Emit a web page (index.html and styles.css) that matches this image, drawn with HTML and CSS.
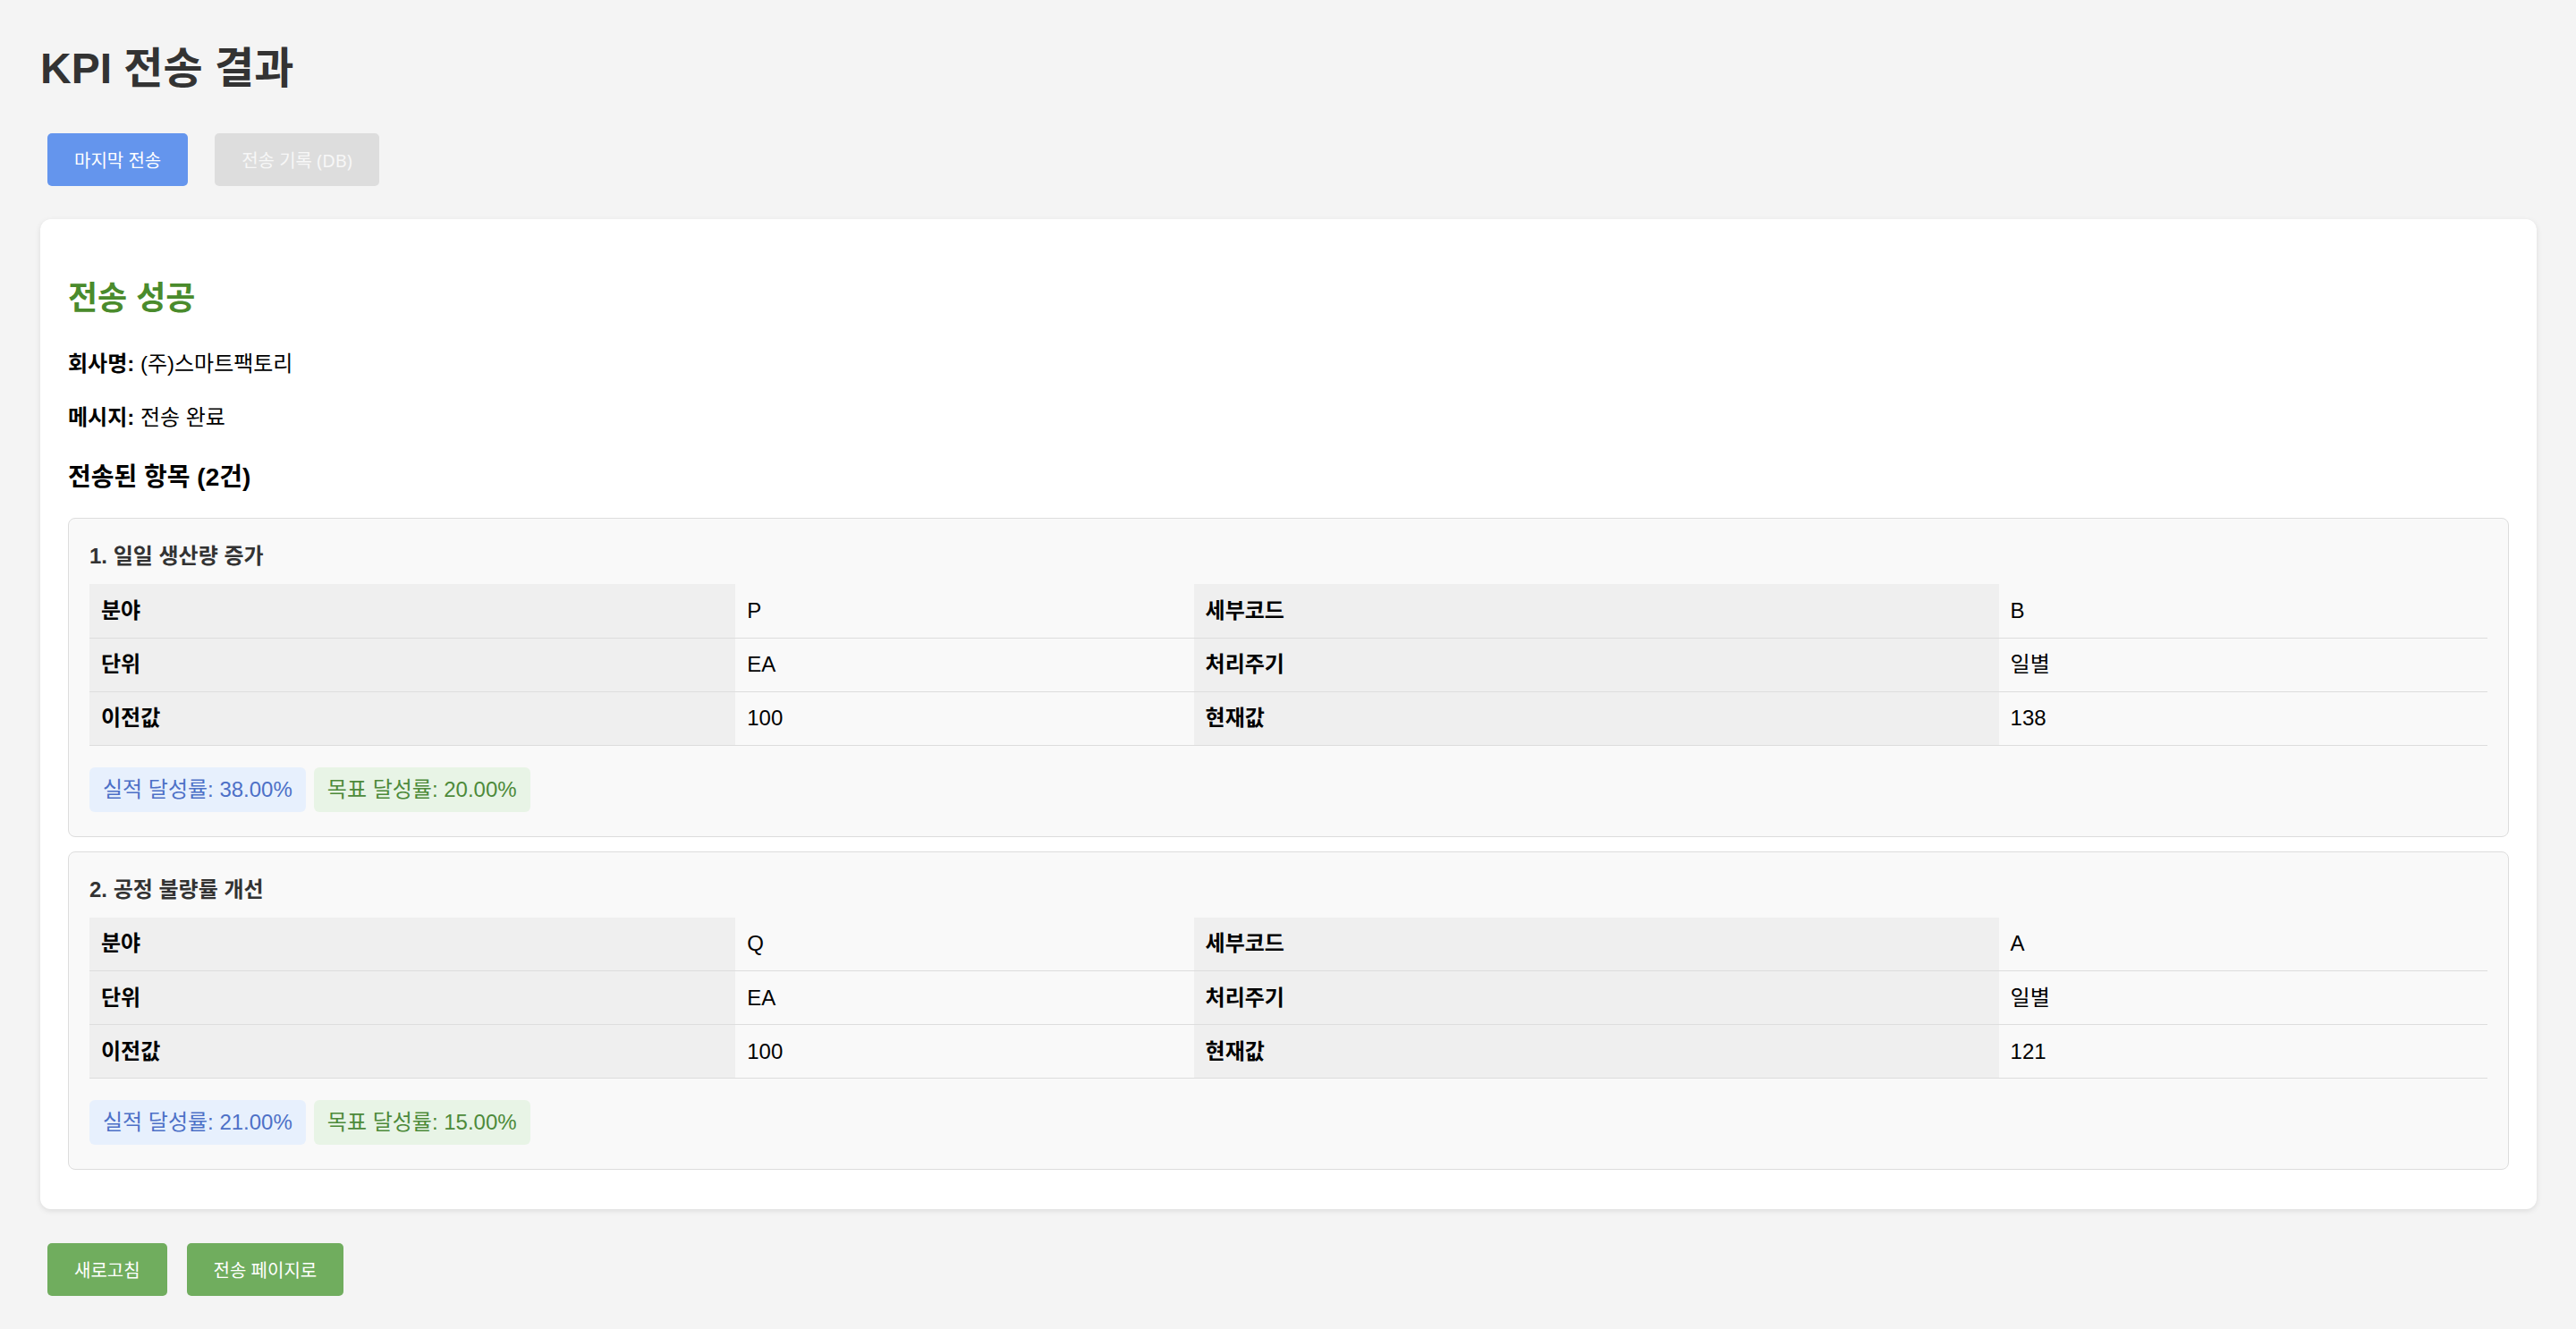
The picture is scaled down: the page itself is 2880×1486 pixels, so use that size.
FILE: index.html
```html
<!DOCTYPE html>
<html>

<head>
  <meta charset="utf-8">
  <title>KPI 전송 결과</title>
  <link rel="stylesheet" href="styles.css">
</head>

<body>

  <h1 class="page-title">KPI 전송 결과</h1>

  <div class="tabs">
    <button class="tab tab-active">마지막 전송</button>
    <button class="tab tab-off">전송 기록 (DB)</button>
  </div>

  <div class="card">
    <h2 class="result-ok">전송 성공</h2>
    <p class="info"><b>회사명:</b> (주)스마트팩토리</p>
    <p class="info"><b>메시지:</b> 전송 완료</p>

    <h3 class="sent-title">전송된 항목 (2건)</h3>

    <div class="item-list">
      <div class="item">
        <h4 class="item-title">1. 일일 생산량 증가</h4>
        <table class="kpi-table">
          <colgroup>
            <col class="c1"><col class="c2"><col class="c3"><col class="c4">
          </colgroup>
          <tr>
            <th>분야</th><td>P</td>
            <th>세부코드</th><td>B</td>
          </tr>
          <tr>
            <th>단위</th><td>EA</td>
            <th>처리주기</th><td>일별</td>
          </tr>
          <tr>
            <th>이전값</th><td>100</td>
            <th>현재값</th><td>138</td>
          </tr>
        </table>
        <div class="rates">
          <span class="rate rate-real">실적 달성률: 38.00%</span>
          <span class="rate rate-goal">목표 달성률: 20.00%</span>
        </div>
      </div>

      <div class="item">
        <h4 class="item-title">2. 공정 불량률 개선</h4>
        <table class="kpi-table">
          <colgroup>
            <col class="c1"><col class="c2"><col class="c3"><col class="c4">
          </colgroup>
          <tr>
            <th>분야</th><td>Q</td>
            <th>세부코드</th><td>A</td>
          </tr>
          <tr>
            <th>단위</th><td>EA</td>
            <th>처리주기</th><td>일별</td>
          </tr>
          <tr>
            <th>이전값</th><td>100</td>
            <th>현재값</th><td>121</td>
          </tr>
        </table>
        <div class="rates">
          <span class="rate rate-real">실적 달성률: 21.00%</span>
          <span class="rate rate-goal">목표 달성률: 15.00%</span>
        </div>
      </div>
    </div>
  </div>

  <div class="actions">
    <button class="btn-green">새로고침</button>
    <button class="btn-green">전송 페이지로</button>
  </div>

</body>

</html>
```

FILE: styles.css
```css
body {
  margin: 0;
  padding: 0 44px 0 45px;
  background-color: #f4f4f4;
  font-family: "Liberation Sans", "Noto Sans CJK KR", sans-serif;
  font-size: 24px;
  color: #000;
}

.page-title {
  margin: 48px 0 0;
  font-size: 48px;
  line-height: 58px;
  font-weight: bold;
  color: #333;
}

/*********** buttons ***********/

.tabs,
.actions {
  display: flex;
  padding-left: 8px;
}

.tabs {
  gap: 30px;
  margin: 43px 0 37px;
}

.actions {
  gap: 22px;
  margin: 38px 0 0;
}

.tab,
.btn-green {
  height: 59px;
  padding: 0 30px;
  border: none;
  border-radius: 5px;
  font-family: "Noto Sans", "Noto Sans CJK KR", sans-serif;
  font-size: 20px;
  color: #fff;
  cursor: pointer;
}

.tab-active {
  background-color: #6495ed;
}

.tab-off {
  background-color: #dddddd;
  color: #f7f7f7;
}

.btn-green {
  background-color: #70ad5e;
}

/*********** result card ***********/

.card {
  background-color: #fff;
  border-radius: 12px;
  box-shadow: 0 2px 6px rgba(0, 0, 0, 0.1);
  padding: 31px 31px 44px;
}

.result-ok {
  margin: 36px 0 34px;
  font-size: 36px;
  line-height: 44px;
  color: #4a8b2c;
}

.info {
  margin: 0 0 27px;
  line-height: 33px;
}

.sent-title {
  margin: 33px 0 27px;
  font-size: 28px;
  line-height: 36px;
}

.item-list {
  display: flex;
  flex-direction: column;
  gap: 16px;
}

.item {
  background-color: #f9f9f9;
  border: 1px solid #dddddd;
  border-radius: 8px;
  padding: 23px;
}

.item-title {
  margin: 0 0 12px;
  font-size: 24px;
  line-height: 38px;
  color: #333;
}

.kpi-table {
  width: 100%;
  border-collapse: collapse;
  table-layout: fixed;
}

.c1 { width: 26.94%; }
.c2 { width: 19.11%; }
.c3 { width: 33.57%; }
.c4 { width: 20.38%; }

.kpi-table th,
.kpi-table td {
  height: 60px;
  padding: 0 13px;
  border-bottom: 1px solid #dddddd;
  text-align: left;
  line-height: 28px;
  box-sizing: border-box;
}

.kpi-table th {
  background-color: #efefef;
  font-weight: bold;
}

.rates {
  display: flex;
  gap: 9px;
  margin: 24px 0 4px;
}

.rate {
  padding: 11px 15px;
  border-radius: 6px;
  line-height: 28px;
}

.rate-real {
  background-color: #e7f0fd;
  color: #4d70c7;
}

.rate-goal {
  background-color: #e8f4e6;
  color: #4d8a3a;
}
```
